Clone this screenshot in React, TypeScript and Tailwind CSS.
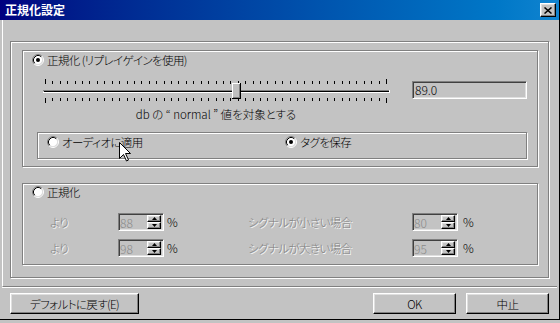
import type { ReactNode } from 'react';

const etched =
  'border border-[#808080] shadow-[inset_1px_1px_0_#fff,1px_1px_0_#fff]';
const raised =
  'border border-t-white border-l-white border-r-black border-b-black shadow-[inset_-1px_-1px_0_#808080,inset_1px_1px_0_#dfdfdf]';
const sunken =
  'border border-t-[#808080] border-l-[#808080] border-r-white border-b-white shadow-[inset_1px_1px_0_#404040,inset_-1px_-1px_0_#dfdfdf]';
const disabled = 'text-[#808080] [text-shadow:1px_1px_0_#fff]';

function Radio({ checked }: { checked?: boolean }) {
  return (
    <svg width="12" height="12" viewBox="0 0 12 12" className="shrink-0">
      <circle cx="6" cy="6" r="4.5" fill="#fff" />
      <path d="M2.11 9.89 A5.5 5.5 0 0 1 9.89 2.11" stroke="#808080" fill="none" />
      <path d="M9.89 2.11 A5.5 5.5 0 0 1 2.11 9.89" stroke="#fff" fill="none" />
      <path d="M2.82 9.18 A4.5 4.5 0 0 1 9.18 2.82" stroke="#000" fill="none" />
      <path d="M9.18 2.82 A4.5 4.5 0 0 1 2.82 9.18" stroke="#dfdfdf" fill="none" />
      {checked && <circle cx="6" cy="6" r="2" fill="#000" />}
    </svg>
  );
}

function Slider() {
  const ticks = Array.from({ length: 47 }, (_, i) => Math.round(4 + (i * 341) / 46));
  return (
    <svg width="350" height="26" viewBox="0 0 350 26" className="shrink-0">
      {ticks.map((x, i) => {
        const end = i === 0 || i === ticks.length - 1;
        return (
          <g key={x} fill="#000">
            <rect x={x} y={end ? 2 : 4} width="1" height={end ? 5 : 3} />
            <rect x={x} y="21" width="1" height={end ? 5 : 3} />
          </g>
        );
      })}
      {/* track */}
      <rect x="2" y="13" width="346" height="1" fill="#808080" />
      <rect x="3" y="14" width="345" height="1" fill="#000" />
      <rect x="2" y="15" width="347" height="1" fill="#fff" />
      <rect x="348" y="13" width="1" height="3" fill="#fff" />
      {/* thumb */}
      <rect x="191" y="6" width="9" height="16" fill="#c0c0c0" />
      <rect x="191" y="6" width="8" height="1" fill="#fff" />
      <rect x="191" y="6" width="1" height="15" fill="#fff" />
      <rect x="199" y="6" width="1" height="16" fill="#000" />
      <rect x="191" y="21" width="9" height="1" fill="#000" />
      <rect x="198" y="7" width="1" height="14" fill="#808080" />
      <rect x="192" y="20" width="7" height="1" fill="#808080" />
    </svg>
  );
}

function SpinBox({ value }: { value: string }) {
  return (
    <div className={`flex h-[18px] w-[46px] bg-[#c3c3c3] py-[1px] pr-[2px] ${sunken}`}>
      <span className="flex-1 pl-[1px] text-[12px] leading-[16px] tracking-normal text-[#8a8a8a]">{value}</span>
      <div className="flex w-[14px] flex-col">
        <div className={`flex h-[8px] items-center justify-center ${raised}`}>
          <svg width="5" height="3" viewBox="0 0 5 3">
            <polygon points="0,3 2.5,0 5,3" fill="#000" />
          </svg>
        </div>
        <div className={`flex h-[8px] items-center justify-center ${raised}`}>
          <svg width="5" height="3" viewBox="0 0 5 3">
            <polygon points="0,0 5,0 2.5,3" fill="#000" />
          </svg>
        </div>
      </div>
    </div>
  );
}

function Button({ width, children }: { width: string; children: ReactNode }) {
  return (
    <div className={`flex h-[21px] items-center justify-center bg-[#c3c3c3] ${width} ${raised}`}>
      {children}
    </div>
  );
}

function SpinRow({ left, right, a, b }: { left: string; right: string; a: string; b: string }) {
  return (
    <div className="flex h-[18px] items-center pl-[27px]">
      <span className={`w-[68px] ${disabled}`}>{left}</span>
      <SpinBox value={a} />
      <span className="ml-[3px] w-[81px] text-[12px]">%</span>
      <span className={`w-[164px] ${disabled}`}>{right}</span>
      <SpinBox value={b} />
      <span className="ml-[5px] text-[12px]">%</span>
    </div>
  );
}

export default function App() {
  return (
    <div className="relative h-[323px] w-[560px] overflow-hidden bg-[#c3c3c3] font-['Noto_Sans_CJK_JP',sans-serif] text-[11.5px] font-light leading-[14px] tracking-[-0.6px] text-black [font-feature-settings:'palt']">
      <div className="flex h-[320px] flex-col border-b border-r border-black">
        {/* Title bar */}
        <div className="flex h-[20px] items-center justify-between bg-linear-to-r from-[#000080] to-[#1084d0] pl-[5px] pr-[3px]">
          <span className="text-[12px] font-bold tracking-normal text-white">正規化設定</span>
          <div className={`flex h-[14px] w-[16px] items-center justify-center bg-[#c3c3c3] ${raised}`}>
            <svg width="8" height="7" viewBox="0 0 8 7">
              <path d="M0.5 0.5 L7.5 6.5 M7.5 0.5 L0.5 6.5" stroke="#000" strokeWidth="1.5" />
            </svg>
          </div>
        </div>

        {/* Panel */}
        <div className="ml-[2px] mr-[2px] h-[267px] border-b border-l border-b-[#808080] border-l-white pl-[7px] pt-[21px] shadow-[0_1px_0_#fff]">
          <div className={`h-[237px] w-[539px] pl-[11px] pt-[8px] ${etched}`}>
            {/* Replay gain group */}
            <div className={`flex h-[117px] w-[516px] flex-col ${etched}`}>
              <div className="flex h-[18px] items-center gap-[3px] pl-[9px]">
                <Radio checked />
                <span>正規化 (リプレイゲインを使用)</span>
              </div>
              <div className="mt-[8px] flex items-start pl-[18px]">
                <Slider />
                <div className={`ml-[21px] mt-[4px] h-[18px] w-[115px] pl-[2px] text-[12px] leading-[16px] tracking-normal ${sunken}`}>
                  89.0
                </div>
              </div>
              <div className="mt-[4px] w-[368px] pl-[18px] text-center">
                <span className="tracking-normal">db の “ normal ” 値を対象とする</span>
              </div>
              <div className={`ml-[14px] mt-[11px] h-[27px] w-[490px] pl-[9px] pt-[2px] ${etched}`}>
                <div className="flex h-[14px] items-center">
                  <div className="flex w-[238px] items-center gap-[3px]">
                    <Radio />
                    <span>オーディオに適用</span>
                  </div>
                  <div className="flex items-center gap-[3px]">
                    <Radio checked />
                    <span>タグを保存</span>
                  </div>
                </div>
              </div>
            </div>

            {/* Manual group */}
            <div className={`mt-[16px] flex h-[82px] w-[516px] flex-col ${etched}`}>
              <div className="mt-[1px] flex h-[14px] items-center gap-[3px] pl-[9px]">
                <Radio />
                <span>正規化</span>
              </div>
              <div className="mt-[14px] flex flex-col gap-[8px]">
                <SpinRow left="より" right="シグナルが小さい場合" a="88" b="80" />
                <SpinRow left="より" right="シグナルが大きい場合" a="98" b="95" />
              </div>
            </div>
          </div>
        </div>

        {/* Buttons */}
        <div className="mt-[6px] flex pl-[10px]">
          <Button width="w-[129px]">デフォルトに戻す(E)</Button>
          <div className="ml-[234px]">
            <Button width="w-[83px]">OK</Button>
          </div>
          <div className="ml-[10px]">
            <Button width="w-[83px]">中止</Button>
          </div>
        </div>
      </div>

      {/* mouse pointer */}
      <svg
        className="absolute left-[119px] top-[142px]"
        width="13"
        height="20"
        viewBox="0 0 13 20"
      >
        <path
          d="M0.5 0.5 L0.5 16.5 L4.5 12.5 L7.5 19 L9.5 18 L6.5 11.5 L11.5 11.5 Z"
          fill="#fff"
          stroke="#000"
          strokeLinejoin="miter"
        />
      </svg>
    </div>
  );
}
